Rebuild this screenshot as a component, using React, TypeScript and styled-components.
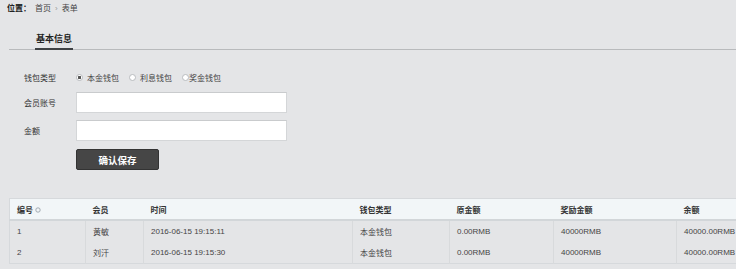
import styled, { createGlobalStyle } from "styled-components";

const GlobalStyle = createGlobalStyle`
  html, body {
    margin: 0;
    padding: 0;
    overflow: hidden;
    background-color: #e4e5e7;
  }
  body {
    font-family: "Liberation Sans", "Noto Sans CJK SC", sans-serif;
    font-size: 8px;
    color: #333;
  }
`;

const rows = [
  { id: "1", member: "黄敏", time: "2016-06-15 19:15:11" },
  { id: "2", member: "刘汗", time: "2016-06-15 19:15:30" },
];

const cols = [76, 58, 209, 97, 104, 123, 90];

const App = () => {
  return (
    <Page>
      <GlobalStyle />
      <Crumb>
        <b>位置：</b>
        <span>首页</span>
        <Sep>›</Sep>
        <span>表单</span>
      </Crumb>

      <TabBar>
        <Tab>基本信息</Tab>
      </TabBar>

      <Form>
        <Label>钱包类型</Label>
        <Radios>
          <RadioItem>
            <Radio $checked />
            本金钱包
          </RadioItem>
          <RadioItem>
            <Radio />
            利息钱包
          </RadioItem>
          <RadioItem $tight>
            <Radio />
            奖金钱包
          </RadioItem>
        </Radios>

        <Label>会员账号</Label>
        <Input />

        <Label>金额</Label>
        <Input />

        <span />
        <Button>确认保存</Button>
      </Form>

      <Table>
        <colgroup>
          {cols.map((w, i) => (
            <col key={i} style={{ width: w }} />
          ))}
        </colgroup>
        <thead>
          <tr>
            <Th>
              编号
              <SortIcon viewBox="0 0 6 6">
                <circle cx="3" cy="3" r="2.2" fill="none" stroke="#9aa3ab" strokeWidth="0.9" />
              </SortIcon>
            </Th>
            <Th>会员</Th>
            <Th>时间</Th>
            <Th>钱包类型</Th>
            <Th>原金额</Th>
            <Th>奖励金额</Th>
            <Th>余额</Th>
          </tr>
        </thead>
        <tbody>
          {rows.map((r) => (
            <tr key={r.id}>
              <Td>{r.id}</Td>
              <Td>{r.member}</Td>
              <Td>{r.time}</Td>
              <Td>本金钱包</Td>
              <Td>0.00RMB</Td>
              <Td>40000RMB</Td>
              <Td>40000.00RMB</Td>
            </tr>
          ))}
        </tbody>
      </Table>
    </Page>
  );
};

export default App;

const Page = styled.div`
  width: 736px;
  height: 269px;
  overflow: hidden;
`;

const Crumb = styled.div`
  height: 18px;
  line-height: 18px;
  padding-left: 7px;
  display: flex;
  gap: 4px;
  color: #444;
  b {
    color: #222;
  }
`;

const Sep = styled.span`
  color: #999;
`;

const TabBar = styled.div`
  margin: 12px 0 0 9px;
  height: 19px;
  border-bottom: 1px solid #b8babc;
  display: flex;
`;

const Tab = styled.div`
  margin-left: 26px;
  padding: 0 1px;
  height: 18px;
  line-height: 18px;
  font-size: 9px;
  font-weight: bold;
  color: #222;
  border-bottom: 2px solid #3e4144;
  margin-bottom: -1px;
`;

const Form = styled.div`
  display: grid;
  grid-template-columns: 52px auto;
  row-gap: 7px;
  align-items: center;
  padding-left: 24px;
  margin-top: 19px;
`;

const Label = styled.div`
  color: #333;
`;

const Radios = styled.div`
  height: 16px;
  display: flex;
  align-items: center;
  color: #444;
`;

const RadioItem = styled.label<{ $tight?: boolean }>`
  display: flex;
  align-items: center;
  gap: ${(p) => (p.$tight ? "0" : "4px")};
  margin-right: 10px;
`;

const Radio = styled.span<{ $checked?: boolean }>`
  width: 5px;
  height: 5px;
  border-radius: 50%;
  border: 1px solid #b9bcbf;
  background: ${(p) =>
    p.$checked ? "radial-gradient(circle, #555 0 1.4px, #fff 1.6px)" : "#fff"};
`;

const Input = styled.input`
  box-sizing: border-box;
  width: 211px;
  height: 21px;
  background: #fff;
  border: 1px solid #d4d6d8;
  border-top-color: #c9cbcd;
  outline: none;
  padding: 0 4px;
  font: inherit;
`;

const Button = styled.button`
  box-sizing: border-box;
  width: 83px;
  height: 21px;
  margin-top: 1px;
  background: #464646;
  border: 1px solid #333;
  border-radius: 2px;
  color: #fff;
  font-family: inherit;
  font-size: 9.5px;
  font-weight: bold;
  padding: 0;
`;

const Table = styled.table`
  margin: 28px 0 0 9px;
  table-layout: fixed;
  width: 757px;
  border-collapse: collapse;
  border: 1px solid #d6d9dc;
`;

const Th = styled.th`
  height: 20px;
  padding: 0 7px;
  text-align: left;
  font-weight: bold;
  color: #333;
  background: #f2f6f8;
  border-bottom: 2px solid #d2d6d9;
  white-space: nowrap;
`;

const SortIcon = styled.svg`
  width: 6px;
  height: 6px;
  margin-left: 2px;
  vertical-align: -0.5px;
`;

const Td = styled.td`
  height: 21px;
  padding: 0 7px;
  color: #444;
  white-space: nowrap;
  border-left: 1px solid #d8dadc;
  &:first-child {
    border-left: none;
  }
`;
